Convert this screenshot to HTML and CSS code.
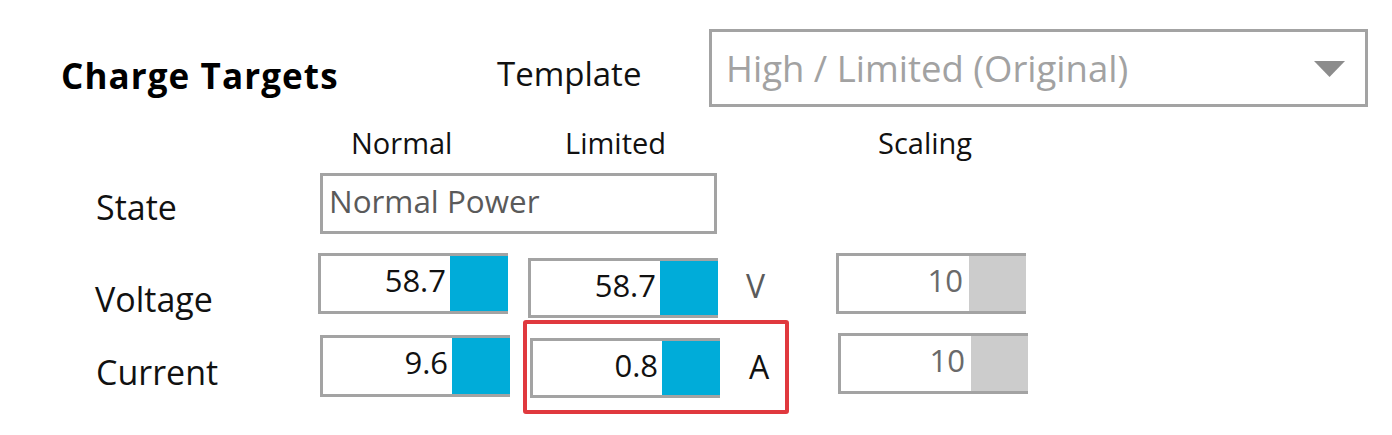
FILE: index.html
```html
<!DOCTYPE html>
<html lang="en">
<head>
<meta charset="utf-8">
<title>Charge Targets</title>
<link rel="stylesheet" href="styles.css">
</head>
<body>
<div class="panel">
  <div class="header">
    <h2 class="title">Charge Targets</h2>
    <span class="template-label">Template</span>
    <div class="dropdown">
      <span class="dropdown-text">High / Limited (Original)</span>
      <svg class="caret" width="31" height="16" viewBox="0 0 31 16"><polygon points="0,0 31,0 15.5,16" fill="#8c8c8c"/></svg>
    </div>
  </div>

  <div class="grid">
    <span class="colhead colhead-normal">Normal</span>
    <span class="colhead colhead-limited">Limited</span>
    <span class="colhead colhead-scaling">Scaling</span>

    <span class="row-label label-state">State</span>
    <div class="textbox"><span class="textbox-text">Normal Power</span></div>

    <span class="row-label label-voltage">Voltage</span>
    <div class="spin col-normal"><span class="spin-value">58.7</span><span class="spin-btn"></span></div>
    <div class="spin col-limited shift-down"><span class="spin-value">58.7</span><span class="spin-btn"></span></div>
    <span class="unit unit-v">V</span>
    <div class="spin spin-disabled col-scaling"><span class="spin-value">10</span><span class="spin-btn"></span></div>

    <span class="row-label label-current">Current</span>
    <div class="spin col-normal nudge-right nudge-down"><span class="spin-value">9.6</span><span class="spin-btn"></span></div>
    <div class="spin col-limited nudge-right shift-down highlighted"><span class="spin-value">0.8</span><span class="spin-btn"></span><span class="highlight"></span></div>
    <span class="unit unit-a">A</span>
    <div class="spin spin-disabled col-scaling nudge-right"><span class="spin-value">10</span><span class="spin-btn"></span></div>
  </div>
</div>
</body>
</html>
```
FILE: styles.css
```css
html, body {
  margin: 0;
  padding: 0;
  background: #ffffff;
}

body {
  font-family: "Open Sans", "Noto Sans", "Liberation Sans", sans-serif;
  color: #111111;
}

.panel {
  width: 1392px;
  height: 435px;
  overflow: hidden;
}

/* ---------- header ---------- */
.header {
  display: flex;
  align-items: flex-start;
  padding: 29px 0 0 61px;
}

.title {
  margin: 27px 0 0 0;
  width: 436px;
  font-size: 35px;
  line-height: 40px;
  font-weight: 700;
  color: #000000;
  letter-spacing: 1.1px;
  white-space: nowrap;
}

.template-label {
  margin-top: 25px;
  width: 212px;
  font-size: 33px;
  line-height: 40px;
  color: #111111;
}

.dropdown {
  box-sizing: border-box;
  width: 659px;
  height: 78px;
  border: 3px solid #a3a3a3;
  display: flex;
  align-items: center;
  justify-content: space-between;
  padding: 0 20px 0 14px;
}

.dropdown-text {
  font-size: 36.5px;
  line-height: 72px;
  color: #a2a2a2;
}

.caret {
  display: block;
  margin-top: 2px;
}

/* ---------- grid ---------- */
.grid {
  display: grid;
  margin: 13px 0 0 95px;
  grid-template-columns: 223px 210px 190px 118px 190px;
  grid-template-rows: 53px 80px 80px 80px;
  align-items: start;
}

.colhead {
  grid-row: 1;
  margin-top: 5px;
  font-size: 29px;
  line-height: 36px;
  color: #111111;
}

.colhead-normal { grid-column: 2; padding-left: 33px; }
.colhead-limited { grid-column: 3; padding-left: 37px; }
.colhead-scaling { grid-column: 5; padding-left: 42px; }

.row-label {
  grid-column: 1;
  font-size: 34px;
  line-height: 36px;
  color: #111111;
}

.label-state { grid-row: 2; margin-top: 16px; padding-left: 1px; }
.label-voltage { grid-row: 3; margin-top: 28px; }
.label-current { grid-row: 4; margin-top: 21px; padding-left: 1px; }

.textbox {
  grid-row: 2;
  grid-column: 2 / 4;
  box-sizing: border-box;
  width: 397px;
  height: 61px;
  margin-left: 2px;
  border: 3px solid #a3a3a3;
  padding-left: 6px;
}

.textbox-text {
  font-size: 31.4px;
  line-height: 50px;
  color: #5a5a5a;
}

/* ---------- spin boxes ---------- */
.spin {
  position: relative;
  box-sizing: border-box;
  width: 190px;
  height: 61px;
  display: flex;
  border: 3px solid #a3a3a3;
  border-right: none;
  background: #ffffff;
}

.spin-value {
  flex: 1;
  text-align: right;
  padding-right: 4px;
  font-size: 31px;
  line-height: 48px;
  color: #111111;
}

.spin-btn {
  width: 58px;
  background: #00acd9;
}

.spin-disabled .spin-value {
  color: #6a6a6a;
  padding-right: 6px;
}

.spin-disabled .spin-btn {
  width: 57px;
  background: #cccccc;
}

.col-normal { grid-column: 2; grid-row: 3; }
.col-limited { grid-column: 3; grid-row: 3; }
.col-scaling { grid-column: 5; grid-row: 3; }

.label-current ~ .spin { grid-row: 4; }

.shift-down { margin-top: 5px; height: 60px; }
.nudge-down { margin-top: 2px; height: 62px; }
.nudge-right { margin-left: 2px; }

.unit {
  grid-column: 4;
  font-size: 32px;
  line-height: 36px;
  color: #5b5b5b;
}

.unit-v { grid-row: 3; margin-top: 15px; padding-left: 28px; }
.unit-a { grid-row: 4; margin-top: 16px; padding-left: 31px; color: #111111; }

.highlight {
  position: absolute;
  left: -10px;
  top: -21px;
  width: 266px;
  height: 94px;
  box-sizing: border-box;
  border: 4px solid #e0393e;
  border-radius: 3px;
  pointer-events: none;
}
```
